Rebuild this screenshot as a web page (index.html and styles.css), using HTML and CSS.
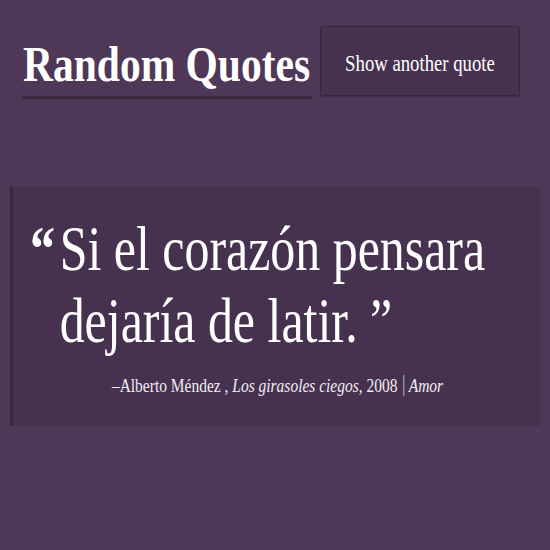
FILE: index.html
```html
<!DOCTYPE html>
<html lang="es">
<head>
<meta charset="utf-8">
<title>Random Quotes</title>
<link rel="stylesheet" href="styles.css">
</head>
<body>
<header class="header">
  <h1 class="title"><span class="title-text">Random Quotes</span></h1>
  <button class="btn" type="button"><span class="btn-text">Show another quote</span></button>
</header>
<main class="card">
  <p class="quote"><span class="mark">“</span>Si el corazón pensara dejaría de latir. ”</p>
  <p class="cite">–Alberto Méndez , <em>Los girasoles ciegos</em>, 2008 <span class="tag"><em>Amor</em></span></p>
</main>
</body>
</html>
```

FILE: styles.css
```css
html, body {
  margin: 0;
  padding: 0;
}
body {
  background: #4e3757;
  color: #ffffff;
  font-family: "Liberation Serif", "Times New Roman", serif;
  width: 550px;
  height: 550px;
  overflow: hidden;
}
.header {
  display: flex;
  align-items: flex-start;
  gap: 8px;
  padding: 26px 0 0 23px;
}
.title {
  margin: 0;
  width: 289px;
  padding: 11px 0 4px 0;
  border-bottom: 3px solid #37283d;
  font-size: 50px;
  line-height: 55px;
  font-weight: bold;
  white-space: nowrap;
}
.title-text {
  display: inline-block;
  transform: scaleX(0.83);
  transform-origin: left center;
}
.btn {
  box-sizing: border-box;
  width: 200px;
  height: 70px;
  margin: 0;
  padding: 5px 0 0 0;
  background: #46324f;
  border: 1px solid #35263b;
  border-radius: 3px;
  box-shadow: 0 1px 1px rgba(0,0,0,0.15);
  color: #ffffff;
  font-family: "Liberation Serif", "Times New Roman", serif;
  font-size: 24px;
  white-space: nowrap;
  overflow: hidden;
  display: flex;
  align-items: center;
  justify-content: center;
}
.btn-text {
  display: inline-block;
  transform: scaleX(0.78);
  transform-origin: center center;
}
.card {
  box-sizing: border-box;
  margin: 88px 10px 0 10px;
  height: 239px;
  padding: 26px 15px 0 17px;
  background: #46324f;
  border-left: 3px solid #37283d;
  border-radius: 0 3px 3px 0;
  overflow: hidden;
}
.quote {
  margin: 0;
  width: 600px;
  box-sizing: border-box;
  padding-left: 38px;
  text-indent: -38px;
  font-size: 64px;
  line-height: 72px;
  transform: scaleX(0.78);
  transform-origin: left top;
}
.mark {
  display: inline-block;
  width: 38px;
  text-indent: 0;
  font-weight: bold;
}
.cite {
  margin: 17px 0 0 0;
  font-size: 19px;
  line-height: 24px;
  text-align: center;
  color: #f2eef3;
  white-space: nowrap;
  transform: scaleX(0.815);
  transform-origin: center top;
}
.cite em {
  font-style: italic;
}
.tag {
  border-left: 1px solid #d9d0dc;
  padding-left: 5px;
  margin-left: 3px;
}
```
